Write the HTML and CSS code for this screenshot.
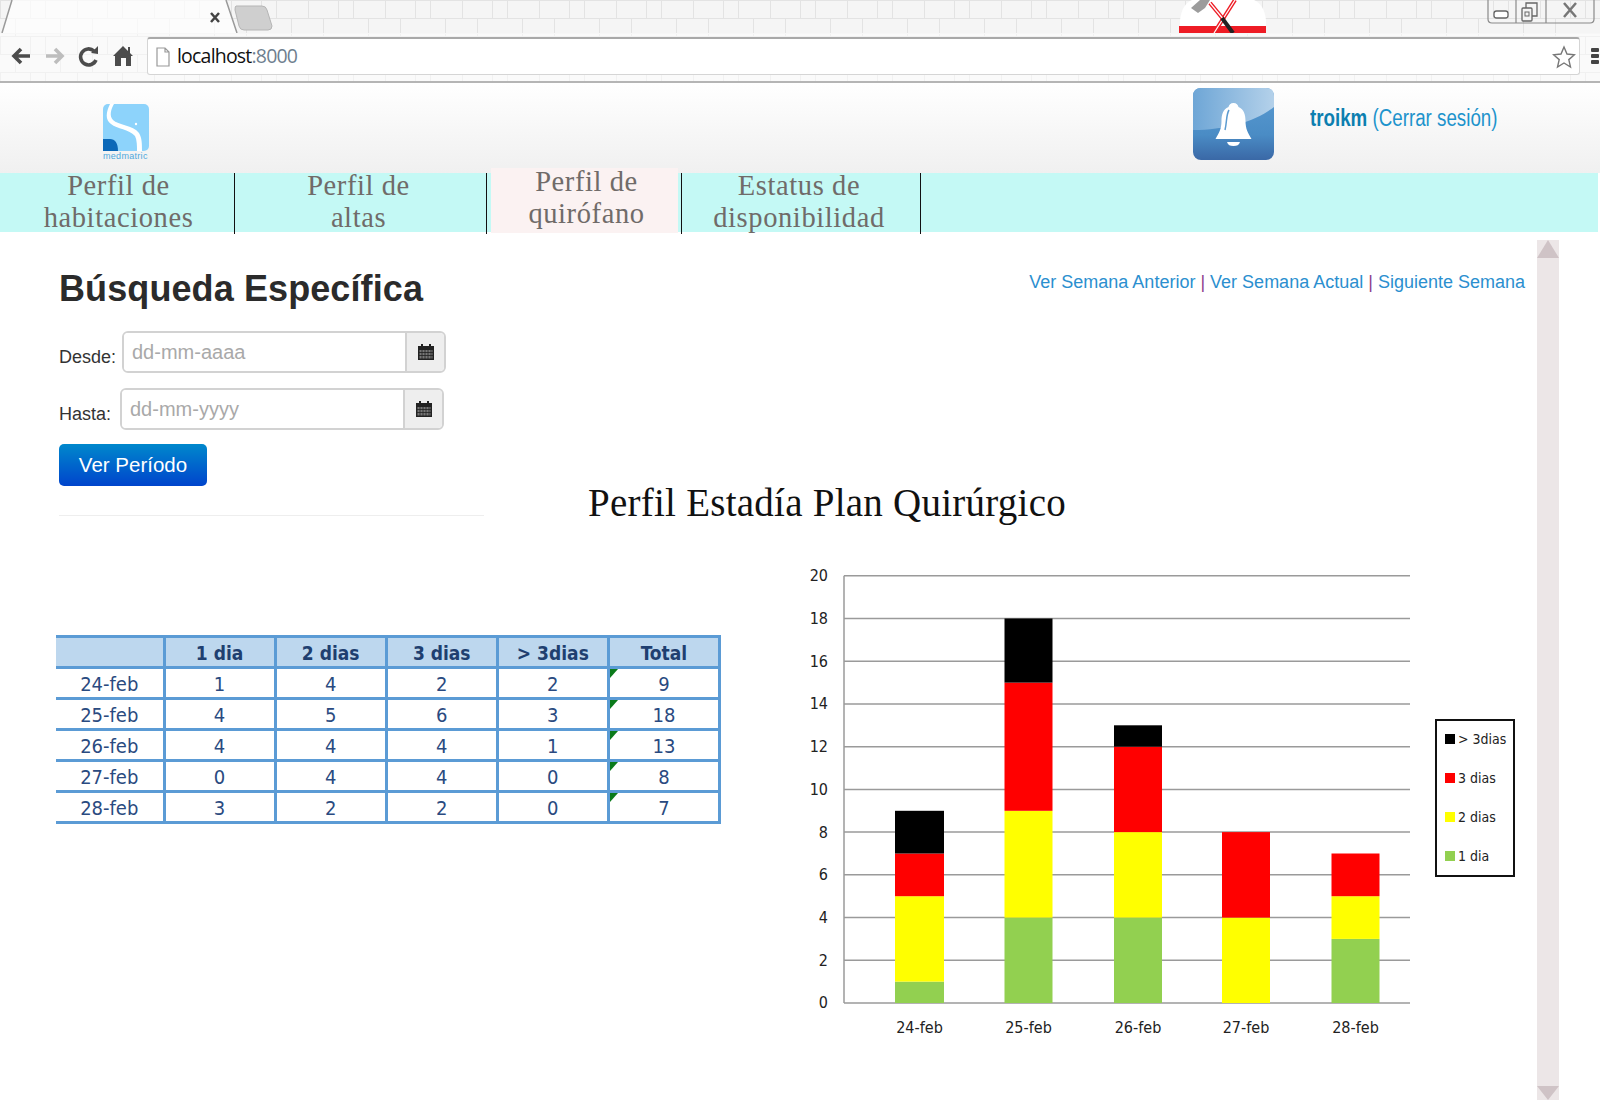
FILE: index.html
```html
<!DOCTYPE html>
<html lang="es">
<head>
    <meta charset="UTF-8">
    <meta name="viewport" content="width=device-width, initial-scale=1.0">
    <title>Perfil Estadía Plan Quirúrgico</title>
    <link rel="stylesheet" href="styles.css">
</head>
<body>
    <!-- browser window -->
    <div class="chrome">
        <div class="tabstrip">
            <svg class="tab-shape" width="290" height="33" viewBox="0 0 290 33">
                <path d="M12 0 L2 33 H238 L226 0 Z" fill="#fff" fill-opacity="0.7"/>
                <path d="M12 0 L2 33 M226 0 L237 33" stroke="#9a9a9a" stroke-width="1.5" fill="none"/>
                <path d="M211 13 L219 22 M219 13 L211 22" stroke="#444" stroke-width="2.5"/>
                <path d="M236 6 H262 Q266 6 267 10 L272 26 Q272 30 268 30 H244 Q240 30 239 26 L235 10 Q235 6 236 6 Z" fill="#cfcfcf" stroke="#b5b5b5"/>
            </svg>
            <svg class="hammer" width="90" height="33" viewBox="0 0 90 33">
                <path d="M2 33 V20 Q4 4 14 0 H76 Q86 4 88 20 V33 Z" fill="#fff"/>
                <rect x="1" y="26" width="87" height="7" fill="#ee1c25"/>
                <path d="M13 8 L22 0 H32 L27 8 L20 13 Z" fill="#9c9c9c"/>
                <path d="M57 0 L36 33" stroke="#ee1c25" stroke-width="4"/>
                <path d="M57 0 L36 33" stroke="#fff" stroke-width="1.2"/>
                <path d="M32 3 L46 20" stroke="#ee1c25" stroke-width="4"/>
                <path d="M32 3 L46 20" stroke="#fff" stroke-width="1.2"/>
                <path d="M44 18 L55 33" stroke="#222" stroke-width="4"/>
            </svg>
            <svg class="window-btns" width="108" height="24" viewBox="0 0 108 24">
                <path d="M1 0 V19 Q1 23 5 23 H103 Q107 23 107 19 V0 M29 0 V23 M59 0 V23" fill="none" stroke="#8a8a8a" stroke-width="1.2"/>
                <rect x="7" y="11" width="14" height="7" rx="2.500" fill="#fff" stroke="#666" stroke-width="1.300"/>
                <path d="M39 8 V3 H50 V16 H45" fill="none" stroke="#666" stroke-width="1.300"/>
                <rect x="35" y="8" width="10" height="13" rx="1" fill="#f4f4f4" stroke="#666" stroke-width="1.300"/>
                <rect x="38" y="12" width="4" height="4" fill="none" stroke="#666"/>
                <path d="M77 3 L89 17 M89 3 L77 17" stroke="#777" stroke-width="2.500"/>
            </svg>
        </div>
        <div class="toolbar">
            <div class="nav-icons">
                <svg width="24" height="24" viewBox="0 0 24 24"><path d="M21 12H6 M12 5 L5 12 L12 19" fill="none" stroke="#4c4c4c" stroke-width="3.6"/></svg>
                <svg width="24" height="24" viewBox="0 0 24 24"><path d="M3 12H18 M12 5 L19 12 L12 19" fill="none" stroke="#bdbdbd" stroke-width="3.6"/></svg>
                <svg width="24" height="24" viewBox="0 0 24 24"><path d="M17 7 A8 8 0 1 0 19 16" fill="none" stroke="#4c4c4c" stroke-width="3.6"/><path d="M14 9 L21 10 L21 2 Z" fill="#4c4c4c"/></svg>
                <svg width="24" height="24" viewBox="0 0 24 24"><path d="M12 2 L17 7 V3 H19 V9 L22 12 H20 V22 H15 V14 H10 V22 H4 V12 H2 Z" fill="#4c4c4c"/></svg>
            </div>
            <div class="addressbar">
                <svg class="page-icon" width="14" height="20" viewBox="0 0 14 20"><path d="M1 1 H9 L13 5 V19 H1 Z M9 1 V5 H13" fill="#fff" stroke="#999" stroke-width="1.2"/></svg>
                <span class="url">localhost<span class="url-port">:8000</span></span>
                <svg class="star" width="24" height="24" viewBox="0 0 24 24"><path d="M12 2 L15 9 L22.500 9.700 L16.800 14.600 L18.500 22 L12 18 L5.500 22 L7.200 14.600 L1.500 9.700 L9 9 Z" fill="#fff" stroke="#777" stroke-width="1.4"/></svg>
            </div>
            <div class="menu-btn"><span></span><span></span><span></span></div>
        </div>
    </div>

    <header class="app-header">
        <svg class="logo" width="48" height="56" viewBox="0 0 48 56">
            <rect x="0" y="0" width="46" height="47" rx="5" fill="#8dd3fb"/>
            <path d="M7 0 C3 8 2 16 8 20 C14 25 26 25 32 32 C34 36 34 42 34 47 H39 C39 40 39 34 36 29 C30 21 15 21 10 16 C6 12 8 5 11 0 Z" fill="#fff"/>
            <path d="M0 35 H7 C12 35 15 39 15 47 H0 Z" fill="#0b68b8"/>
            <circle cx="33" cy="20" r="1.200" fill="#fff"/>
            <text x="0" y="55" class="logo-text">medmatric</text>
        </svg>
        <svg class="bell" width="81" height="72" viewBox="0 0 81 72">
            <defs>
                <linearGradient id="bellBg" x1="0" y1="0" x2="0" y2="1">
                    <stop offset="0" stop-color="#5a9bd2"/>
                    <stop offset="0.65" stop-color="#4a8cc5"/>
                    <stop offset="1" stop-color="#3a68a6"/>
                </linearGradient>
                <linearGradient id="bellGloss" x1="0" y1="0" x2="1" y2="0">
                    <stop offset="0" stop-color="#6ea6d6"/>
                    <stop offset="1" stop-color="#b4d1ea"/>
                </linearGradient>
            </defs>
            <rect width="81" height="72" rx="8" fill="url(#bellBg)"/>
            <path d="M0 42 V8 Q0 0 8 0 H73 Q81 0 81 8 V19 C62 34 32 42 0 42 Z" fill="url(#bellGloss)"/>
            <path d="M40.500 15 C37.500 15 36 17 35.500 19 C30 21 28.500 27 28.500 33 C28.500 41 26 45 22.500 51 H58.500 C55 45 52.500 41 52.500 33 C52.500 27 51 21 45.500 19 C45 17 43.500 15 40.500 15 Z" fill="#fff"/>
            <path d="M34 54 H47 C46 57 44 58 40.500 58 C37 58 35 57 34 54 Z" fill="#fff"/>
            <path d="M36 22 C33 27 34 34 32 42" fill="none" stroke="#5c9bd0" stroke-width="1.500"/>
        </svg>
        <div class="user-box"><b>troikm</b> (Cerrar sesión)</div>
    </header>

    <nav class="main-nav">
        <a class="nav-item item-rooms"><span>Perfil de<br>habitaciones</span></a>
        <a class="nav-item item-discharge"><span>Perfil de<br>altas</span></a>
        <a class="nav-item item-surgery active"><span>Perfil de<br>quirófano</span></a>
        <a class="nav-item item-status"><span>Estatus de<br>disponibilidad</span></a>
    </nav>

    <div class="page-body">
        <main class="content">
            <div class="top-row">
                <section class="search">
                    <h2>Búsqueda Específica</h2>
                    <div class="date-row row-from">
                        <label>Desde:</label>
                        <div class="date-input">
                            <input type="text" placeholder="dd-mm-aaaa">
                            <span class="addon">
                                <svg width="16" height="16" viewBox="0 0 16 16"><path d="M0 2 H3 V0 H5 V2 H11 V0 H13 V2 H16 V16 H0 Z" fill="#222"/><path d="M1.500 6 H14.500 V14.500 H1.500 Z" fill="#777"/><path d="M4 6 V15 M7 6 V15 M10 6 V15 M13 6 V15 M1 8.500 H15 M1 11.500 H15" stroke="#222" stroke-width="0.8"/></svg>
                            </span>
                        </div>
                    </div>
                    <div class="date-row row-to">
                        <label>Hasta:</label>
                        <div class="date-input">
                            <input type="text" placeholder="dd-mm-yyyy">
                            <span class="addon">
                                <svg width="16" height="16" viewBox="0 0 16 16"><path d="M0 2 H3 V0 H5 V2 H11 V0 H13 V2 H16 V16 H0 Z" fill="#222"/><path d="M1.500 6 H14.500 V14.500 H1.500 Z" fill="#777"/><path d="M4 6 V15 M7 6 V15 M10 6 V15 M13 6 V15 M1 8.500 H15 M1 11.500 H15" stroke="#222" stroke-width="0.8"/></svg>
                            </span>
                        </div>
                    </div>
                    <button class="btn-period">Ver Período</button>
                    <hr>
                </section>
                <section class="top-right">
                    <div class="week-links">
                        <a>Ver Semana Anterior</a> | <a>Ver Semana Actual</a> | <a>Siguiente Semana</a>
                    </div>
                    <h1 class="chart-title">Perfil Estadía Plan Quirúrgico</h1>
                </section>
            </div>

            <div class="bottom-row">
                <table class="stay-table">
                    <thead>
                        <tr><th></th><th>1 dia</th><th>2 dias</th><th>3 dias</th><th>&gt; 3dias</th><th>Total</th></tr>
                    </thead>
                    <tbody>
                        <tr><td>24-feb</td><td>1</td><td>4</td><td>2</td><td>2</td><td class="total">9</td></tr>
                        <tr><td>25-feb</td><td>4</td><td>5</td><td>6</td><td>3</td><td class="total">18</td></tr>
                        <tr><td>26-feb</td><td>4</td><td>4</td><td>4</td><td>1</td><td class="total">13</td></tr>
                        <tr><td>27-feb</td><td>0</td><td>4</td><td>4</td><td>0</td><td class="total">8</td></tr>
                        <tr><td>28-feb</td><td>3</td><td>2</td><td>2</td><td>0</td><td class="total">7</td></tr>
                    </tbody>
                </table>

                <svg class="chart" width="750" height="490" viewBox="780 560 750 490">
                    <g class="grid">
                        <path d="M844 575.700 V1003"/>
                        <path d="M844 575.700 H1410"/>
                        <path d="M844 618.500 H1410"/>
                        <path d="M844 661.200 H1410"/>
                        <path d="M844 703.900 H1410"/>
                        <path d="M844 746.700 H1410"/>
                        <path d="M844 789.400 H1410"/>
                        <path d="M844 832.100 H1410"/>
                        <path d="M844 874.800 H1410"/>
                        <path d="M844 917.600 H1410"/>
                        <path d="M844 960.300 H1410"/>
                        <path d="M844 1003 H1410"/>
                    </g>
                    <g class="y-labels">
                        <text x="828" y="581">20</text>
                        <text x="828" y="624">18</text>
                        <text x="828" y="667">16</text>
                        <text x="828" y="709">14</text>
                        <text x="828" y="752">12</text>
                        <text x="828" y="795">10</text>
                        <text x="828" y="838">8</text>
                        <text x="828" y="880">6</text>
                        <text x="828" y="923">4</text>
                        <text x="828" y="966">2</text>
                        <text x="828" y="1008">0</text>
                    </g>
                    <!-- 24-feb -->
                    <rect class="s1" x="895" y="981.600" width="49" height="21.400"/>
                    <rect class="s2" x="895" y="896.200" width="49" height="85.400"/>
                    <rect class="s3" x="895" y="853.500" width="49" height="42.700"/>
                    <rect class="s4" x="895" y="810.800" width="49" height="42.700"/>
                    <!-- 25-feb -->
                    <rect class="s1" x="1004.500" y="917.600" width="48" height="85.400"/>
                    <rect class="s2" x="1004.500" y="810.800" width="48" height="106.800"/>
                    <rect class="s3" x="1004.500" y="682.600" width="48" height="128.200"/>
                    <rect class="s4" x="1004.500" y="618.500" width="48" height="64.100"/>
                    <!-- 26-feb -->
                    <rect class="s1" x="1114" y="917.600" width="48" height="85.400"/>
                    <rect class="s2" x="1114" y="832.100" width="48" height="85.500"/>
                    <rect class="s3" x="1114" y="746.700" width="48" height="85.400"/>
                    <rect class="s4" x="1114" y="725.300" width="48" height="21.400"/>
                    <!-- 27-feb -->
                    <rect class="s2" x="1222" y="917.600" width="48" height="85.400"/>
                    <rect class="s3" x="1222" y="832.100" width="48" height="85.500"/>
                    <!-- 28-feb -->
                    <rect class="s1" x="1331.500" y="938.900" width="48" height="64.100"/>
                    <rect class="s2" x="1331.500" y="896.200" width="48" height="42.700"/>
                    <rect class="s3" x="1331.500" y="853.500" width="48" height="42.700"/>
                    <g class="x-labels">
                        <text x="919.500" y="1033">24-feb</text>
                        <text x="1028.500" y="1033">25-feb</text>
                        <text x="1138" y="1033">26-feb</text>
                        <text x="1246" y="1033">27-feb</text>
                        <text x="1355.500" y="1033">28-feb</text>
                    </g>
                    <rect class="legend-box" x="1436" y="720" width="78" height="156"/>
                    <g class="legend-text">
                        <rect class="s4" x="1445" y="734" width="10" height="10"/>
                        <text x="1458" y="744">&gt; 3dias</text>
                        <rect class="s3" x="1445" y="773" width="10" height="10"/>
                        <text x="1458" y="783">3 dias</text>
                        <rect class="s2" x="1445" y="812" width="10" height="10"/>
                        <text x="1458" y="822">2 dias</text>
                        <rect class="s1" x="1445" y="851" width="10" height="10"/>
                        <text x="1458" y="861">1 dia</text>
                    </g>
                </svg>
            </div>
        </main>

        <div class="scrollbar">
            <div class="arrow-up"></div>
            <div class="arrow-down"></div>
        </div>
    </div>
</body>
</html>
```

FILE: styles.css
```css
* {
    box-sizing: border-box;
}

html, body {
    margin: 0;
    height: 1100px;
    overflow: hidden;
}

body {
    background: #fff;
    font-family: "Liberation Sans", Arial, sans-serif;
    color: #333;
}

/* browser window */
.chrome {
    height: 83px;
    background-color: #f5f5f5;
    background-image: url("data:image/svg+xml,%3Csvg xmlns='http://www.w3.org/2000/svg' width='77' height='36'%3E%3Cpath d='M0 .5H77M0 18.500H77M.5 1V18M30.500 1V18M45.500 1V18M15.500 19V36M60.500 19V36' stroke='%23e3e3e3' fill='none'/%3E%3C/svg%3E");
    border-bottom: 2px solid #b5b5b5;
}

.tabstrip {
    height: 33px;
    display: flex;
    align-items: flex-start;
}

.tab-shape {
    flex: none;
}

.hammer {
    flex: none;
    margin-left: 888px;
}

.window-btns {
    flex: none;
    margin-left: 219px;
}

.toolbar {
    height: 48px;
    padding-top: 3px;
    display: flex;
    align-items: flex-start;
    background: rgba(255, 255, 255, 0.5);
    border-top: 1px solid #f7f7f7;
}

.nav-icons {
    width: 147px;
    height: 38px;
    padding-left: 9px;
    display: flex;
    align-items: center;
    gap: 10px;
}

.addressbar {
    width: 1433px;
    height: 38px;
    padding: 0 3px 0 8px;
    display: flex;
    align-items: center;
    background: #fff;
    border: 1px solid #d5d5d5;
    border-top: 2px solid #a9a9a9;
    border-radius: 3px;
}

.url {
    margin-left: 7px;
    margin-top: -2px;
    font-family: "Open Sans", sans-serif;
    font-size: 19.500px;
    letter-spacing: -0.8px;
    color: #111;
    flex: 1;
}

.url-port {
    color: #6f7f8f;
}

.menu-btn {
    margin: 11px 0 0 11px;
    width: 8px;
    display: flex;
    flex-direction: column;
    gap: 2px;
}

.menu-btn span {
    height: 4px;
    background: #444;
    border-radius: 1px;
}

/* app header */
.app-header {
    height: 90px;
    padding: 5px 0 0 103px;
    display: flex;
    align-items: flex-start;
    background: linear-gradient(#fff, #f0f0f0);
}

.logo {
    flex: none;
    margin-top: 16px;
}

.logo-text {
    font-family: "Liberation Sans", sans-serif;
    font-size: 9px;
    letter-spacing: 0.3px;
    fill: #4fa8dc;
}

.bell {
    flex: none;
    margin-left: 1042px;
}

.user-box {
    margin: 17px 0 0 36px;
    font-size: 23px;
    color: #1d93cc;
    white-space: nowrap;
    transform: scaleX(0.815);
    transform-origin: left center;
}

.user-box b {
    color: #0c7fb0;
}

/* menu */
.main-nav {
    width: 1598px;
    height: 59px;
    display: flex;
    background: #c4f9f5;
}

.nav-item {
    flex: none;
    height: 61px;
    font-family: "Liberation Serif", serif;
    font-size: 28.500px;
    line-height: 32px;
    letter-spacing: 0.6px;
    text-align: center;
    color: #706b69;
    border-right: 1.500px solid #111;
}

.nav-item span {
    display: block;
    margin-top: -3px;
}

.item-rooms {
    width: 235px;
    padding-left: 3px;
}

.item-discharge {
    width: 252px;
    padding-right: 4px;
}

.item-surgery {
    width: 187px;
    margin-left: 4px;
    margin-right: 3px;
    margin-top: -5px;
    height: 65px;
    padding-left: 4px;
    background: #fbf2f2;
    border-right: 0;
}

.item-status {
    width: 240px;
    padding-right: 4px;
    border-left: 1.500px solid #111;
}

.item-surgery span {
    margin-top: -2px;
}

/* main area */
.page-body {
    height: 868px;
    display: flex;
}

.content {
    width: 1537px;
    padding-left: 59px;
}

.scrollbar {
    flex: none;
    width: 22px;
    margin-top: 8px;
    display: flex;
    flex-direction: column;
    justify-content: space-between;
    background: #ece6e7;
}

.arrow-up {
    width: 0;
    height: 0;
    border-left: 11px solid transparent;
    border-right: 11px solid transparent;
    border-bottom: 18px solid #cfc3c6;
}

.arrow-down {
    width: 0;
    height: 0;
    border-left: 11px solid transparent;
    border-right: 11px solid transparent;
    border-top: 14px solid #cfc3c6;
}

.top-row {
    display: flex;
}

.search {
    width: 425px;
    flex: none;
}

.search h2 {
    margin: 36px 0 21px;
    font-size: 36px;
    line-height: 42px;
    font-weight: bold;
    letter-spacing: 0.1px;
    color: #2b2b2b;
}

.date-row {
    display: flex;
    align-items: flex-start;
}

.date-row label {
    font-size: 18px;
    margin-top: 16px;
    color: #333;
}

.row-from label {
    width: 63px;
}

.row-to {
    margin-top: 15px;
}

.row-to label {
    width: 61px;
}

.date-input {
    width: 324px;
    height: 42px;
    display: flex;
    border: 2px solid #d2d2d2;
    border-radius: 6px;
    overflow: hidden;
}

.date-input input {
    flex: 1;
    min-width: 0;
    padding: 0 8px;
    border: 0;
    outline: 0;
    font-family: "Liberation Sans", sans-serif;
    font-size: 20px;
}

.date-input input::placeholder {
    color: #a9a9a9;
}

.addon {
    width: 39px;
    display: flex;
    align-items: center;
    justify-content: center;
    background: #eee;
    border-left: 2px solid #d2d2d2;
}

.btn-period {
    display: block;
    width: 148px;
    height: 42px;
    margin-top: 14px;
    padding: 0;
    border: 0;
    border-radius: 5px;
    background: linear-gradient(#0088cc, #0044cc);
    color: #fff;
    font-family: "Liberation Sans", sans-serif;
    font-size: 20.500px;
}

.search hr {
    margin: 29px 0 0;
    border: 0;
    border-top: 1px solid #eee;
}

.top-right {
    flex: 1;
}

.week-links {
    margin-top: 39px;
    padding-right: 12px;
    text-align: right;
    font-size: 18px;
    line-height: 22px;
    color: #8d3d8d;
}

.week-links a {
    color: #2b8fcf;
}

.chart-title {
    margin: 187px 0 0 104px;
    font-family: "Liberation Serif", serif;
    font-size: 39px;
    line-height: 46px;
    letter-spacing: 0.25px;
    font-weight: normal;
    color: #111;
}

.bottom-row {
    display: flex;
    align-items: flex-start;
    margin-top: 34px;
}

/* table */
.stay-table {
    flex: none;
    width: 665px;
    margin: 75px 0 0 -3px;
    table-layout: fixed;
    border-collapse: collapse;
    font-family: "DejaVu Sans Condensed", "DejaVu Sans", sans-serif;
    font-stretch: condensed;
    font-size: 20px;
    color: #2a4a80;
}

.stay-table th, .stay-table td {
    height: 31px;
    padding: 2px 0 0;
    text-align: center;
    border: 3px solid #5b9bd5;
}

.stay-table th {
    background: #bdd7ee;
    font-size: 19px;
    font-weight: bold;
    color: #1f3f70;
}

.stay-table tr > :first-child {
    border-left: 0;
}

.stay-table th:first-child {
    width: 108px;
}

.total {
    position: relative;
}

/* little green error mark */
.total::before {
    content: "";
    position: absolute;
    top: 0;
    left: 0;
    border-top: 9px solid #0a7a1a;
    border-right: 8px solid transparent;
}

/* chart */
.chart {
    flex: none;
    margin-left: 59px;
}

.grid path {
    fill: none;
    stroke: #9a9a9a;
    stroke-width: 1.500;
}

.y-labels text {
    text-anchor: end;
}

.x-labels text {
    text-anchor: middle;
}

.y-labels text, .x-labels text, .legend-text text {
    font-family: "DejaVu Sans Condensed", "DejaVu Sans", sans-serif;
    font-stretch: condensed;
    font-size: 16px;
    fill: #222;
}

.legend-text text {
    font-size: 14px;
}

.s1 { fill: #92d050; }
.s2 { fill: #ffff00; }
.s3 { fill: #ff0000; }
.s4 { fill: #000; }

.legend-box {
    fill: #fff;
    stroke: #111;
    stroke-width: 2;
}
```
